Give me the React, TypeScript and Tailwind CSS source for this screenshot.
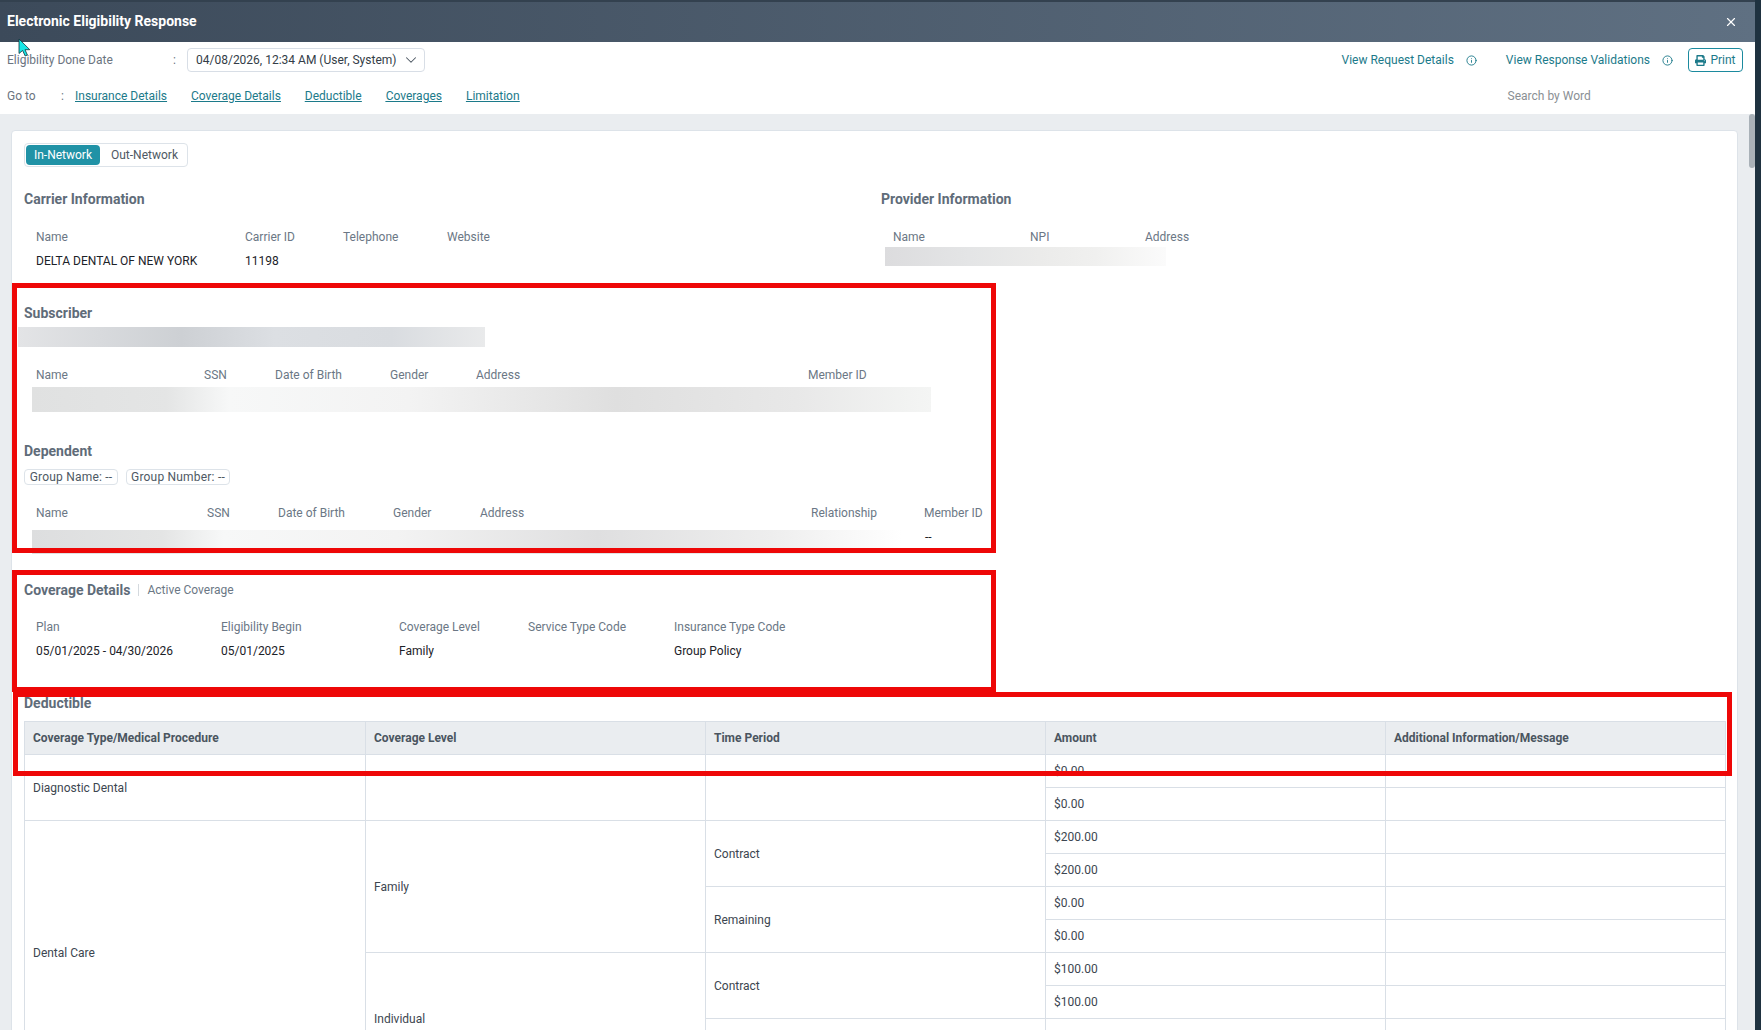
import React from "react";
import { ChevronDown, Info, X } from "lucide-react";
import { FaPrint } from "react-icons/fa";

function Row({ cols, className }: { cols: [string, string][]; className: string }) {
  return (
    <div className={`flex h-6 items-center ${className}`}>
      {cols.map(([t, w], i) => (
        <div key={i} className={`shrink-0 ${w}`}>
          {t}
        </div>
      ))}
    </div>
  );
}

const Heading = ({ children, className = "" }: { children: React.ReactNode; className?: string }) => (
  <div className={`text-[14px] font-bold leading-5 text-[#5f6c79] ${className}`}>{children}</div>
);

const Th = ({ children }: { children: React.ReactNode }) => (
  <th className="h-[33px] border border-[#d9dfe6] bg-[#eaedf0] px-2 text-left text-[12px] font-bold text-[#4a5560]">
    {children}
  </th>
);
const Td = ({ children, rowSpan }: { children?: React.ReactNode; rowSpan?: number }) => (
  <td rowSpan={rowSpan} className="h-[33px] border border-[#d9dfe6] px-2 text-[12px] text-[#3c4650]">
    {children}
  </td>
);

export default function App() {
  return (
    <div className="relative flex h-[1030px] w-[1761px] overflow-hidden bg-[#1f3240] font-['Roboto',sans-serif] text-[12px]">
      <div className="flex h-full w-[1755px] shrink-0 flex-col">
        <header className="flex h-[42px] shrink-0 items-center justify-between border-t-2 border-[#33414f] bg-[linear-gradient(90deg,#3c4a5a,#5f7082)] pb-0.5 pl-[7px] pr-[17px]">
          <h1 className="text-[14px] font-bold text-white">Electronic Eligibility Response</h1>
          <X className="mt-0.5 h-[14px] w-[14px] text-white" strokeWidth={2} />
        </header>

        <nav className="h-[72px] shrink-0 bg-white text-[#6b7480]">
          <div className="flex h-9 items-center justify-between pl-[7px] pr-3">
            <div className="flex items-center">
              <span className="w-[166px]">Eligibility Done Date</span>
              <span className="w-[14px]">:</span>
              <div className="flex h-6 w-[238px] items-center justify-between rounded border border-[#d8dee6] pl-2 pr-1 text-[#333d47]">
                <span>04/08/2026, 12:34 AM (User, System)</span>
                <ChevronDown className="h-[18px] w-[18px] text-[#4a5560]" strokeWidth={1.4} />
              </div>
            </div>
            <div className="flex items-center text-[#1c7a8a]">
              <span>View Request Details</span>
              <Info className="ml-3 h-[11px] w-[11px]" strokeWidth={2} />
              <span className="ml-[29px]">View Response Validations</span>
              <Info className="ml-3 h-[11px] w-[11px]" strokeWidth={2} />
              <button className="ml-[15px] flex h-6 w-[55px] items-center justify-center gap-1 rounded border border-[#1c8a9e]">
                <FaPrint className="h-[11px] w-[11px]" />
                Print
              </button>
            </div>
          </div>
          <div className="flex h-9 items-center pl-[7px]">
            <span className="w-[54px]">Go to</span>
            <span className="w-[14px]">:</span>
            <div className="flex gap-6 text-[#1c7a8a] underline">
              <a>Insurance Details</a>
              <a>Coverage Details</a>
              <a>Deductible</a>
              <a>Coverages</a>
              <a>Limitation</a>
            </div>
            <span className="ml-[988px] text-[#8a8f94]">Search by Word</span>
          </div>
        </nav>

        <div className="relative min-h-0 flex-1 bg-[#eaedf0] pl-[11px] pr-[17px] pt-4">
          <div className="absolute right-0 top-0 h-[54px] w-[6px] rounded-sm bg-[#a9b1b8]" />
          <main className="h-[960px] overflow-hidden rounded-t border border-[#dde3e9] bg-white pl-3 pt-3">
            <div className="flex h-6 w-[164px] items-center rounded border border-[#dde3e9] p-px">
              <span className="flex h-5 w-[74px] items-center justify-center rounded-sm bg-[#2092a6] text-white">In-Network</span>
              <span className="ml-[11px] text-[#4e5964]">Out-Network</span>
            </div>

            <div className="mt-[22px] flex h-[84px]">
              <section className="w-[857px] shrink-0">
                <Heading>Carrier Information</Heading>
                <div className="mt-4 pl-3">
                  <Row className="text-[#6b7785]" cols={[["Name", "w-[209px]"], ["Carrier ID", "w-[98px]"], ["Telephone", "w-[104px]"], ["Website", "w-[80px]"]]} />
                  <Row className="text-[#1c2228]" cols={[["DELTA DENTAL OF NEW YORK", "w-[209px]"], ["11198", "w-[98px]"]]} />
                </div>
              </section>
              <section>
                <Heading>Provider Information</Heading>
                <div className="mt-4 pl-3">
                  <Row className="text-[#6b7785]" cols={[["Name", "w-[137px]"], ["NPI", "w-[115px]"], ["Address", "w-[80px]"]]} />
                  <div className="-ml-2 -mt-0.5 h-[19px] w-[281px] bg-[linear-gradient(90deg,#dcdcde,#e4e5e6_30%,#ebebea_55%,#f0f0ef_75%,#fbfbfb)]" />
                </div>
              </section>
            </div>

            <section className="mt-[30px]">
              <Heading>Subscriber</Heading>
              <div className="-ml-1.5 mt-1 h-5 w-[467px] bg-[linear-gradient(90deg,#e3e4e6,#cdd0d4_35%,#dcdfe3_55%,#d9dce0_80%,#e9eaeb)]" />
              <div className="mt-4 pl-3">
                <Row className="text-[#6b7785]" cols={[["Name", "w-[168px]"], ["SSN", "w-[71px]"], ["Date of Birth", "w-[115px]"], ["Gender", "w-[86px]"], ["Address", "w-[332px]"], ["Member ID", "w-[80px]"]]} />
                <div className="-ml-1 h-[25px] w-[899px] bg-[linear-gradient(90deg,#e0e1e1,#e4e5e5_15%,#f7f8f8_22%,#f3f3f3_42%,#dfdfdf_65%,#e8e8e8_85%,#f4f5f4)]" />
              </div>
            </section>

            <section className="mt-[29px]">
              <Heading>Dependent</Heading>
              <div className="mt-2 flex gap-2 text-[#4e5964]">
                <span className="flex h-4 w-[94px] items-center justify-center rounded-sm border border-[#dde3e9] tracking-[0.2px]">Group Name: --</span>
                <span className="flex h-4 w-[104px] items-center justify-center rounded-sm border border-[#dde3e9] tracking-[0.2px]">Group Number: --</span>
              </div>
              <div className="mt-4 pl-3">
                <Row className="text-[#6b7785]" cols={[["Name", "w-[171px]"], ["SSN", "w-[71px]"], ["Date of Birth", "w-[115px]"], ["Gender", "w-[87px]"], ["Address", "w-[331px]"], ["Relationship", "w-[113px]"], ["Member ID", "w-[80px]"]]} />
                <div className="relative -ml-1 mt-[5px] h-[24px] w-[870px] bg-[linear-gradient(90deg,#dddedf,#e4e5e5_15%,#f7f8f8_22%,#f3f3f3_42%,#dfdfe0_65%,#eeeeee_85%,#ffffff)]">
                  <span className="absolute left-[893px] top-[-2px] whitespace-nowrap text-[#1c2228]">--</span>
                </div>
              </div>
            </section>

            <section className="mt-[26px]">
              <div className="flex items-center">
                <Heading>Coverage Details</Heading>
                <span className="ml-2 mr-2 h-3 w-px bg-[#d4d9de]" />
                <span className="text-[#6b7785]">Active Coverage</span>
              </div>
              <div className="mt-[15px] pl-3">
                <Row className="text-[#6b7785]" cols={[["Plan", "w-[185px]"], ["Eligibility Begin", "w-[178px]"], ["Coverage Level", "w-[129px]"], ["Service Type Code", "w-[146px]"], ["Insurance Type Code", "w-[140px]"]]} />
                <Row className="text-[#1c2228]" cols={[["05/01/2025 - 04/30/2026", "w-[185px]"], ["05/01/2025", "w-[178px]"], ["Family", "w-[129px]"], ["", "w-[146px]"], ["Group Policy", "w-[140px]"]]} />
              </div>
            </section>

            <section className="mt-[30px]">
              <Heading>Deductible</Heading>
              <table className="mt-2 w-[1701px] table-fixed border-collapse">
                <colgroup>
                  <col className="w-[341px]" />
                  <col className="w-[340px]" />
                  <col className="w-[340px]" />
                  <col className="w-[340px]" />
                  <col className="w-[340px]" />
                </colgroup>
                <thead>
                  <tr>
                    <Th>Coverage Type/Medical Procedure</Th>
                    <Th>Coverage Level</Th>
                    <Th>Time Period</Th>
                    <Th>Amount</Th>
                    <Th>Additional Information/Message</Th>
                  </tr>
                </thead>
                <tbody>
                  <tr>
                    <Td rowSpan={2}>Diagnostic Dental</Td>
                    <Td rowSpan={2} />
                    <Td rowSpan={2} />
                    <Td>$0.00</Td>
                    <Td />
                  </tr>
                  <tr>
                    <Td>$0.00</Td>
                    <Td />
                  </tr>
                  <tr>
                    <Td rowSpan={8}>Dental Care</Td>
                    <Td rowSpan={4}>Family</Td>
                    <Td rowSpan={2}>Contract</Td>
                    <Td>$200.00</Td>
                    <Td />
                  </tr>
                  <tr>
                    <Td>$200.00</Td>
                    <Td />
                  </tr>
                  <tr>
                    <Td rowSpan={2}>Remaining</Td>
                    <Td>$0.00</Td>
                    <Td />
                  </tr>
                  <tr>
                    <Td>$0.00</Td>
                    <Td />
                  </tr>
                  <tr>
                    <Td rowSpan={4}>Individual</Td>
                    <Td rowSpan={2}>Contract</Td>
                    <Td>$100.00</Td>
                    <Td />
                  </tr>
                  <tr>
                    <Td>$100.00</Td>
                    <Td />
                  </tr>
                  <tr>
                    <Td rowSpan={2}> </Td>
                    <Td> </Td>
                    <Td />
                  </tr>
                  <tr>
                    <Td> </Td>
                    <Td />
                  </tr>
                </tbody>
              </table>
            </section>
          </main>
        </div>
      </div>

      {/* red annotation boxes drawn over the screenshot */}
      <div className="absolute left-3 top-[283px] h-[270px] w-[984px] border-[5px] border-[#ee0707]" />
      <div className="absolute left-3 top-[570px] h-[122px] w-[984px] border-[5px] border-[#ee0707]" />
      <div className="absolute left-[13px] top-[692px] h-[84px] w-[1719px] border-[5px] border-[#ee0707]" />

      {/* mouse pointer */}
      <svg className="absolute left-[18px] top-[38px]" width="13" height="19" viewBox="0 0 13 19">
        <path d="M1 1v14.5l3.6-3 2.6 5.5 2.2-1-2.4-5.3h4.8z" fill="#18e6e6" stroke="#10343c" strokeWidth="0.8" />
      </svg>
    </div>
  );
}
